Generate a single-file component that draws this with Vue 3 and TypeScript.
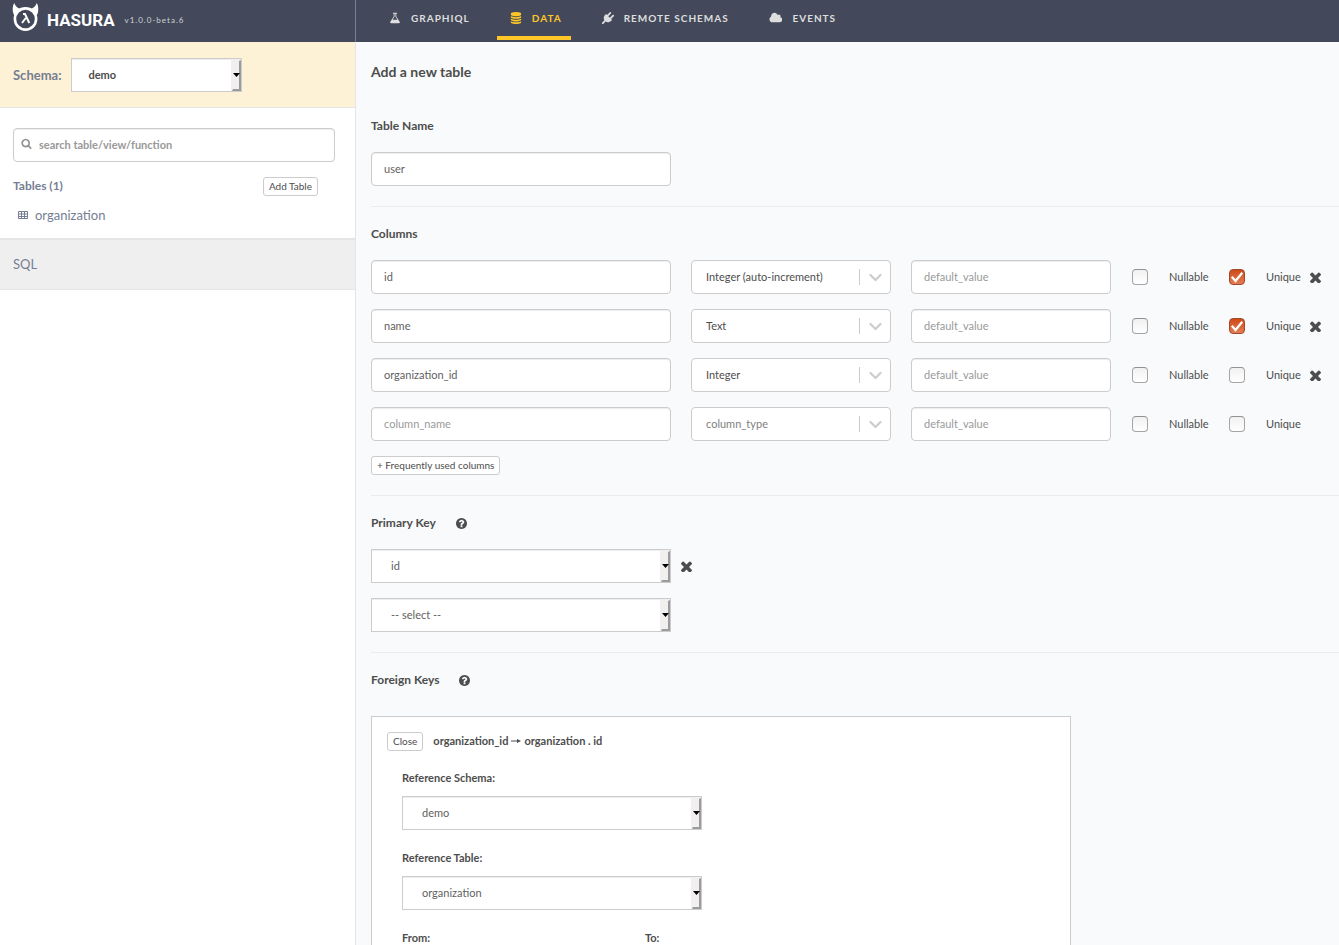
<script setup lang="ts">
import { ref } from 'vue'

interface Column {
  name: string
  type: string
  nullable: boolean
  unique: boolean
  removable: boolean
}

const schema = ref('demo')
const search = ref('')
const tableName = ref('user')
const types = ['Integer (auto-increment)', 'Text', 'Integer']
const columns = ref<Column[]>([
  { name: 'id', type: 'Integer (auto-increment)', nullable: false, unique: true, removable: true },
  { name: 'name', type: 'Text', nullable: false, unique: true, removable: true },
  { name: 'organization_id', type: 'Integer', nullable: false, unique: false, removable: true },
  { name: '', type: '', nullable: false, unique: false, removable: false },
])
const primaryKeys = ref(['id', ''])
const refSchema = ref('demo')
const refTable = ref('organization')

const icons = {
  flask: 'M1591 1448q56 89 21.5 152.5t-140.5 63.5h-1152q-106 0-140.5-63.5t21.5-152.5l503-793v-399h-64q-26 0-45-19t-19-45 19-45 45-19h512q26 0 45 19t19 45-19 45-45 19h-64v399zm-779-725l-272 429h712l-272-429-20-31v-436h-128v436z',
  database: 'M896 768q237 0 443-43t325-127v170q0 69-103 128t-280 93.5-385 34.5-385-34.5-280-93.5-103-128v-170q119 84 325 127t443 43zm0 768q237 0 443-43t325-127v170q0 69-103 128t-280 93.5-385 34.5-385-34.5-280-93.5-103-128v-170q119 84 325 127t443 43zm0-384q237 0 443-43t325-127v170q0 69-103 128t-280 93.5-385 34.5-385-34.5-280-93.5-103-128v-170q119 84 325 127t443 43zm0-1152q208 0 385 34.5t280 93.5 103 128v128q0 69-103 128t-280 93.5-385 34.5-385-34.5-280-93.5-103-128v-128q0-69 103-128t280-93.5 385-34.5z',
  plug: 'M1755 453q37 38 37 90.5t-37 90.5l-401 400 150 150-160 160q-163 163-389.5 186.5t-411.5-100.5l-362 362h-181v-181l362-362q-124-185-100.5-411.5t186.5-389.5l160-160 150 150 400-401q38-37 91-37t90 37 37 90.5-37 90.5l-400 401 234 234 401-400q38-37 91-37t90 37z',
  cloud: 'M1984 1152q0 159-112.5 271.5t-271.5 112.5h-1088q-185 0-316.5-131.5t-131.5-316.5q0-132 71-241.5t187-163.5q-2-28-2-43 0-212 150-362t362-150q158 0 286.5 88t187.5 230q70-62 166-62 106 0 181 75t75 181q0 75-41 138 129 30 213 134.5t84 239.5z',
  times: 'M1490 1322q0 40-28 68l-136 136q-28 28-68 28t-68-28l-294-294-294 294q-28 28-68 28t-68-28l-136-136q-28-28-28-68t28-68l294-294-294-294q-28-28-28-68t28-68l136-136q28-28 68-28t68 28l294 294 294-294q28-28 68-28t68 28l136 136q28 28 28 68t-28 68l-294 294 294 294q28 28 28 68z',
  help: 'M1024 1376v-192q0-14-9-23t-23-9h-192q-14 0-23 9t-9 23v192q0 14 9 23t23 9h192q14 0 23-9t9-23zm256-672q0-88-55.5-163t-138.5-116-170-41q-243 0-371 213-15 24 8 42l132 100q7 6 19 6 16 0 25-12 53-68 86-92 34-24 86-24 48 0 85.5 26t37.5 59q0 38-20 61t-68 45q-63 28-115.5 86.5t-52.5 125.5v36q0 14 9 23t23 9h192q14 0 23-9t9-23q0-19 21.5-49.5t54.5-49.5q32-18 49-28.5t46-35 44.5-48 28-60.5 12.5-81zm384 192q0 209-103 385.5t-279.5 279.5-385.5 103-385.5-103-279.5-279.5-103-385.5 103-385.5 279.5-279.5 385.5-103 385.5 103 279.5 279.5 103 385.5z',
  search: 'M1216 832q0-185-131.5-316.5t-316.5-131.5-316.5 131.5-131.5 316.5 131.5 316.5 316.5 131.5 316.5-131.5 131.5-316.5zm512 832q0 52-38 90t-90 38q-54 0-90-38l-343-342q-179 124-399 124-143 0-273.5-55.5t-225-150-150-225-55.5-273.5 55.5-273.5 150-225 225-150 273.5-55.5 273.5 55.5 225 150 150 225 55.5 273.5q0 220-124 399l343 343q37 37 37 90z',
}

const nav = [
  { label: 'GRAPHIQL', icon: icons.flask, box: '0 0 1792 1792', active: false },
  { label: 'DATA', icon: icons.database, box: '0 0 1792 1792', active: true },
  { label: 'REMOTE SCHEMAS', icon: icons.plug, box: '0 0 1792 1792', active: false },
  { label: 'EVENTS', icon: icons.cloud, box: '0 0 2048 1792', active: false },
]

function removeColumn(index: number) {
  columns.value.splice(index, 1)
}
</script>

<template>
  <div class="app">
    <header class="topbar">
      <div class="brand">
        <a href="#" class="logo">
          <svg class="logo-mark" viewBox="0 0 26 32" aria-hidden="true">
            <circle cx="13" cy="19" r="10.6" fill="none" stroke="#fff" stroke-width="2.6" />
            <path d="M1 14C-.4 10 .1 5.500 1.700 3C3 6.500 5 8.300 8.500 8.800Q4 11 2.500 16ZM25 14C26.400 10 25.900 5.500 24.300 3C23 6.500 21 8.300 17.500 8.800Q22 11 23.500 16Z" fill="#fff" />
            <path d="M10.500 14h2l4.300 9M13.300 18l-3.800 5" fill="none" stroke="#fff" stroke-width="2" />
          </svg>
          <span class="logo-text">HASURA</span>
        </a>
        <span class="version">v1.0.0-beta.6</span>
      </div>
      <nav class="nav">
        <a v-for="item in nav" :key="item.label" href="#" class="nav-item" :class="{ active: item.active }">
          <svg class="nav-icon" :viewBox="item.box" aria-hidden="true"><path :d="item.icon" /></svg>
          <span>{{ item.label }}</span>
        </a>
      </nav>
    </header>

    <div class="body">
      <aside class="sidebar">
        <div class="schema">
          <label for="schema">Schema:</label>
          <div class="native schema-select">
            <select id="schema" v-model="schema"><option>demo</option></select>
            <svg class="native-arrow" viewBox="0 0 10 32" aria-hidden="true">
              <path d="M0 0h10v32H0z" fill="#f1f0ef" /><path d="M8 2l2-1v31H1l1-2h6z" fill="#9b9b9b" /><path d="M2 14h7l-3.500 4z" fill="#000" />
            </svg>
          </div>
        </div>
        <div class="tables">
          <div class="search">
            <svg class="search-icon" viewBox="0 0 1792 1792" aria-hidden="true"><path :d="icons.search" /></svg>
            <input v-model="search" type="text" class="field" placeholder="search table/view/function" aria-label="search table/view/function" />
          </div>
          <div class="tables-head">
            <h2>Tables (1)</h2>
            <button type="button" class="small-btn">Add Table</button>
          </div>
          <a href="#" class="table-link">
            <svg viewBox="0 0 10 8" aria-hidden="true">
              <path d="M.5.5h9v7h-9zM0 3h10M0 5.500h10M3.500 1v7M6.500 1v7" fill="none" stroke="currentColor" />
            </svg>
            <span>organization</span>
          </a>
        </div>
        <a href="#" class="sql">SQL</a>
      </aside>

      <main class="main">
        <h1>Add a new table</h1>

        <section>
          <h2><label for="table-name">Table Name</label></h2>
          <input id="table-name" v-model="tableName" type="text" class="field wide" />
        </section>
        <hr />

        <section>
          <h2>Columns</h2>
          <div class="stack">
            <div v-for="(col, i) in columns" :key="i" class="column-row">
              <input v-model="col.name" type="text" class="field" placeholder="column_name" aria-label="column_name" />
              <div class="combo">
                <select v-model="col.type" :class="{ empty: !col.type }" aria-label="column_type">
                  <option value="" disabled>column_type</option>
                  <option v-for="t in types" :key="t">{{ t }}</option>
                </select>
                <svg class="combo-arrow" viewBox="0 0 32 16" aria-hidden="true">
                  <path d="M.5 0v16" stroke="#ccc" fill="none" />
                  <path d="M11.500 6l5 5 5-5" stroke="#ccc" stroke-width="2.2" stroke-linecap="round" stroke-linejoin="round" fill="none" />
                </svg>
              </div>
              <input type="text" class="field" placeholder="default_value" aria-label="default_value" />
              <label class="check">
                <span class="tick"><input v-model="col.nullable" type="checkbox" /></span>
                <span>Nullable</span>
              </label>
              <label class="check">
                <span class="tick">
                  <input v-model="col.unique" type="checkbox" />
                  <svg v-if="col.unique" viewBox="0 0 16 16" aria-hidden="true">
                    <path d="M2.800 7.800L6.500 12L13.300 3.800" fill="none" stroke="#fff" stroke-width="2.2" />
                  </svg>
                </span>
                <span>Unique</span>
              </label>
              <button v-if="col.removable" type="button" class="remove" aria-label="Remove column" @click="removeColumn(i)">
                <svg viewBox="302 302 1188 1188" aria-hidden="true"><path :d="icons.times" /></svg>
              </button>
            </div>
          </div>
          <button type="button" class="small-btn frequent">+ Frequently used columns</button>
        </section>
        <hr />

        <section>
          <h2>Primary Key <svg class="help" viewBox="128 128 1536 1536" aria-hidden="true"><path :d="icons.help" /></svg></h2>
          <div class="stack">
            <div v-for="(_, i) in primaryKeys" :key="i" class="key-row">
              <div class="native wide">
                <select v-model="primaryKeys[i]" aria-label="Primary key column">
                  <option value="">-- select --</option>
                  <option>id</option>
                </select>
                <svg class="native-arrow" viewBox="0 0 10 32" aria-hidden="true">
                  <path d="M0 0h10v32H0z" fill="#f1f0ef" /><path d="M8 2l2-1v31H1l1-2h6z" fill="#9b9b9b" /><path d="M2 14h7l-3.500 4z" fill="#000" />
                </svg>
              </div>
              <button v-if="primaryKeys[i]" type="button" class="remove" aria-label="Remove key" @click="primaryKeys[i] = ''">
                <svg viewBox="302 302 1188 1188" aria-hidden="true"><path :d="icons.times" /></svg>
              </button>
            </div>
          </div>
        </section>
        <hr />

        <section>
          <h2>Foreign Keys <svg class="help" viewBox="128 128 1536 1536" aria-hidden="true"><path :d="icons.help" /></svg></h2>
          <div class="card">
            <div class="card-head">
              <button type="button" class="small-btn">Close</button>
              <strong class="relation">
                organization_id
                <svg viewBox="0 0 10 6" aria-hidden="true"><path d="M0 2.500h6V1l4 2-4 2V3.500H0z" /></svg>
                organization . id
              </strong>
            </div>
            <div class="card-body">
              <div class="group">
                <label for="ref-schema">Reference Schema:</label>
                <div class="native wide">
                  <select id="ref-schema" v-model="refSchema"><option>demo</option></select>
                  <svg class="native-arrow" viewBox="0 0 10 32" aria-hidden="true">
                    <path d="M0 0h10v32H0z" fill="#f1f0ef" /><path d="M8 2l2-1v31H1l1-2h6z" fill="#9b9b9b" /><path d="M2 14h7l-3.500 4z" fill="#000" />
                  </svg>
                </div>
              </div>
              <div class="group">
                <label for="ref-table">Reference Table:</label>
                <div class="native wide">
                  <select id="ref-table" v-model="refTable"><option>organization</option></select>
                  <svg class="native-arrow" viewBox="0 0 10 32" aria-hidden="true">
                    <path d="M0 0h10v32H0z" fill="#f1f0ef" /><path d="M8 2l2-1v31H1l1-2h6z" fill="#9b9b9b" /><path d="M2 14h7l-3.500 4z" fill="#000" />
                  </svg>
                </div>
              </div>
              <div class="mapping"><strong>From:</strong><strong>To:</strong></div>
            </div>
          </div>
        </section>
      </main>
    </div>
  </div>
</template>

<style>
html, body { margin: 0; background: #f8fafb; }
</style>

<style scoped>
.app {
  display: flex;
  flex-direction: column;
  height: 100vh;
  overflow: hidden;
  color: #4d4d4d;
  font: 11px/20px Lato, "Noto Sans", sans-serif;
}
* { box-sizing: border-box; }
a { text-decoration: none; color: inherit; }
h1, h2 { margin: 0; font-weight: 700; }
svg { display: block; flex: none; fill: currentColor; }
input, select, button { font: inherit; color: inherit; margin: 0; }

.topbar { display: flex; flex: none; height: 42px; background: #43495a; color: #dedede; }
.brand {
  display: flex;
  flex: none;
  align-items: center;
  gap: 10px;
  width: 356px;
  padding: 0 0 2px 12px;
  border-right: 1px solid #788095;
}
.logo { display: flex; align-items: center; gap: 8px; color: #fff; }
.logo-mark { width: 27px; height: 32px; margin-bottom: 8px; }
.logo-text { font: 700 17px/20px Roboto, sans-serif; }
.version { font-size: 8px; letter-spacing: 1px; color: #d0d2d8; }
.nav { display: flex; gap: 18px; padding-left: 20px; }
.nav-item {
  display: flex;
  align-items: center;
  gap: 10px;
  height: 40px;
  padding: 0 9px 0 13px;
  border-bottom: 4px solid transparent;
  font-size: 10px;
  font-weight: 700;
  letter-spacing: 1px;
}
.nav-item.active { color: #ffc627; border-bottom-color: #ffc627; }
.nav-icon { height: 12px; }

.body { display: flex; flex: 1; min-height: 0; }
.sidebar { flex: none; width: 356px; background: #fff; border-right: 1px solid #e3e5e8; color: #767e93; }
.schema {
  display: flex;
  align-items: center;
  gap: 10px;
  height: 66px;
  padding-left: 13px;
  background: #fdf2d5;
  border-bottom: 1px solid #e5e5e5;
  font-weight: 700;
}
.schema label { font-size: 13px; }
.schema-select { width: 171px; color: #4d4d4d; }

.native { position: relative; height: 34px; }
.native select {
  appearance: none;
  width: 100%;
  height: 34px;
  padding: 0 20px 0 19px;
  background: #fff;
  border: 1px solid #ccc;
  border-radius: 0;
  box-shadow: inset 0 1px 1px rgba(0, 0, 0, 0.075);
}
.schema-select select { padding-left: 16px; }
.native-arrow { position: absolute; top: 1px; right: 1px; width: 10px; height: 32px; pointer-events: none; }
.main .native select, .main .field { color: #5f5f5f; }

.field {
  width: 100%;
  height: 34px;
  padding: 0 12px 2px;
  background: #fff;
  border: 1px solid #ccc;
  border-radius: 4px;
  box-shadow: inset 0 1px 1px rgba(0, 0, 0, 0.075);
}
.field::placeholder { color: #999; opacity: 1; }
.wide { width: 300px; }

.tables { padding: 20px 20px 13px 13px; }
.search { position: relative; }
.search .field { padding-left: 25px; font-weight: 700; }
.search-icon { position: absolute; top: 10px; left: 8px; width: 11px; height: 11px; fill: #8e8e8e; }
.tables-head { display: flex; align-items: center; justify-content: space-between; padding: 14px 17px 9px 0; }
.tables-head h2 { font-size: 12px; }
.small-btn {
  height: 19px;
  padding: 0 5px;
  background: #fff;
  border: 1px solid #ccc;
  border-radius: 3px;
  color: #4d4d4d;
  font-size: 10px;
  line-height: 17px;
}
.table-link { display: flex; align-items: center; gap: 7px; padding-left: 5px; font-size: 13px; }
.table-link svg { width: 10px; height: 8px; }
.sql {
  display: block;
  padding: 14px 13px 15px;
  background: #efefef;
  border-top: 2px solid #e5e5e5;
  border-bottom: 1px solid #e5e5e5;
  font-size: 13px;
}

.main { flex: 1; min-width: 0; padding: 20px 0 0 15px; overflow: hidden; background: #f8fafb; }
.main h1 { margin-bottom: 34px; font-size: 14px; }
.main h2 { display: flex; align-items: center; gap: 20px; margin-bottom: 16px; font-size: 12px; }
hr { margin: 20px 0 17px; border: 0; border-top: 1px solid #eaecee; }
.stack { display: grid; gap: 15px; }
.column-row {
  display: grid;
  grid-template-columns: 300px 200px 200px 77px 62px 12px;
  gap: 20px;
  align-items: center;
}
.combo { position: relative; }
.combo select {
  appearance: none;
  display: block;
  width: 100%;
  height: 34px;
  padding: 0 32px 0 14px;
  background: #fff;
  border: 1px solid #ccc;
  border-radius: 4px;
}
.combo select.empty { color: #808080; }
.combo-arrow { position: absolute; top: 9px; right: 0; width: 32px; height: 16px; pointer-events: none; }
.check { display: flex; align-items: center; gap: 21px; padding-left: 1px; white-space: nowrap; }
.tick { position: relative; flex: none; width: 16px; height: 16px; }
.tick input {
  appearance: none;
  display: block;
  width: 16px;
  height: 16px;
  border: 1px solid #a5a5a5;
  border-top-color: #929292;
  border-radius: 4px;
  background: linear-gradient(#f1f1f1, #fff);
}
.tick input:checked { border-color: #a0482a; background: linear-gradient(#cf4b17, #e57c55); }
.tick svg { position: absolute; inset: 0; width: 16px; height: 16px; pointer-events: none; }
.remove { padding: 0; border: 0; background: none; color: #4d4d4d; }
.remove svg { width: 11px; height: 11px; }
.frequent { display: block; margin-top: 15px; }
.key-row { display: flex; align-items: center; gap: 10px; }
.help { width: 11px; height: 11px; }

.card { width: 700px; max-width: 100%; min-height: 300px; margin-top: 26px; padding: 14px 15px; background: #fff; border: 1px solid #ccc; }
.card-head { display: flex; align-items: center; gap: 10px; }
.relation { display: flex; align-items: center; gap: 3px; }
.relation svg { width: 10px; height: 6px; }
.card-body { padding: 17px 15px 0; }
.group { margin-bottom: 18px; }
.group label { display: block; margin-bottom: 8px; font-weight: 700; }
.mapping { display: grid; grid-template-columns: 243px 1fr; }
</style>
